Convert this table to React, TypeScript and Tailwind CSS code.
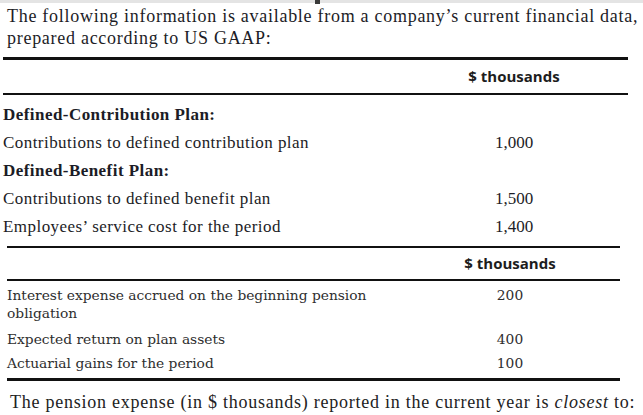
import React from "react"

const serif = { fontFamily: '"Liberation Serif", "Times New Roman", serif' }

type Row = { label: string; value?: string; bold?: boolean }

const planRows: Row[] = [
  { label: "Defined-Contribution Plan:", bold: true },
  { label: "Contributions to defined contribution plan", value: "1,000" },
  { label: "Defined-Benefit Plan:", bold: true },
  { label: "Contributions to defined benefit plan", value: "1,500" },
  { label: "Employees\u2019 service cost for the period", value: "1,400" },
]

const pensionRows: Row[] = [
  { label: "Interest expense accrued on the beginning pension obligation", value: "200" },
  { label: "Expected return on plan assets", value: "400" },
  { label: "Actuarial gains for the period", value: "100" },
]

function Header() {
  return (
    <div className="flex h-full items-center font-['Open_Sans',sans-serif] text-[15px] font-bold text-[#1d1d1d]">
      $ thousands
    </div>
  )
}

export default function App() {
  return (
    <div className="w-[643px] h-[415px] bg-white overflow-hidden text-[#1c1c26]" style={serif}>
      {/* top strip */}
      <div className="flex h-[3px] bg-[#e4e4e4]">
        <div className="ml-[315px] h-[4px] w-[5px] bg-[#3a3a3a]" />
      </div>

      <p className="pl-[7px] pt-[2px] text-[18px] leading-[22px] tracking-[0.72px] whitespace-nowrap">
        The following information is available from a company’s current financial data,
        <br />
        prepared according to US GAAP:
      </p>

      {/* first table */}
      <div className="mt-[8px] ml-[3px] w-[625px]">
        <div className="grid grid-cols-[1fr_228px] h-[38px] border-t-[3px] border-b-[2px] border-[#111]">
          <div />
          <div className="flex justify-center">
            <Header />
          </div>
        </div>
        <div className="pt-[6px] pb-[5px]">
          {planRows.map((r) => (
            <div key={r.label} className="grid grid-cols-[1fr_228px] h-[28px] items-center text-[17px] tracking-[0.45px]">
              <span className={r.bold ? "font-bold" : ""}>{r.label}</span>
              <span className="text-center tracking-normal">{r.value}</span>
            </div>
          ))}
        </div>
      </div>

      {/* second table */}
      <div className="ml-[7px] w-[613px]">
        <div className="grid grid-cols-[1fr_220px] h-[35px] border-t-[2px] border-b-[2px] border-[#111]">
          <div />
          <div className="flex justify-center">
            <Header />
          </div>
        </div>
        <div className="pt-[5px] pb-[3px] font-['DejaVu_Serif',serif] text-[13.8px] text-[#2e2e2e]">
          {pensionRows.map((r, i) => (
            <div
              key={r.label}
              className={`grid grid-cols-[1fr_220px] ${i === 0 ? "items-start leading-[18px] pb-[5px]" : "h-[24px] items-center"}`}
            >
              <span className="max-w-[380px]">{r.label}</span>
              <span className="text-center">{r.value}</span>
            </div>
          ))}
        </div>
        <div className="h-[3px] bg-[#111]" />
      </div>

      <p className="pl-[10px] mt-[10px] text-[18px] leading-[22px] tracking-[0.75px] whitespace-nowrap text-[#222]">
        The pension expense (in $ thousands) reported in the current year is <i>closest</i> to:
      </p>
    </div>
  )
}
